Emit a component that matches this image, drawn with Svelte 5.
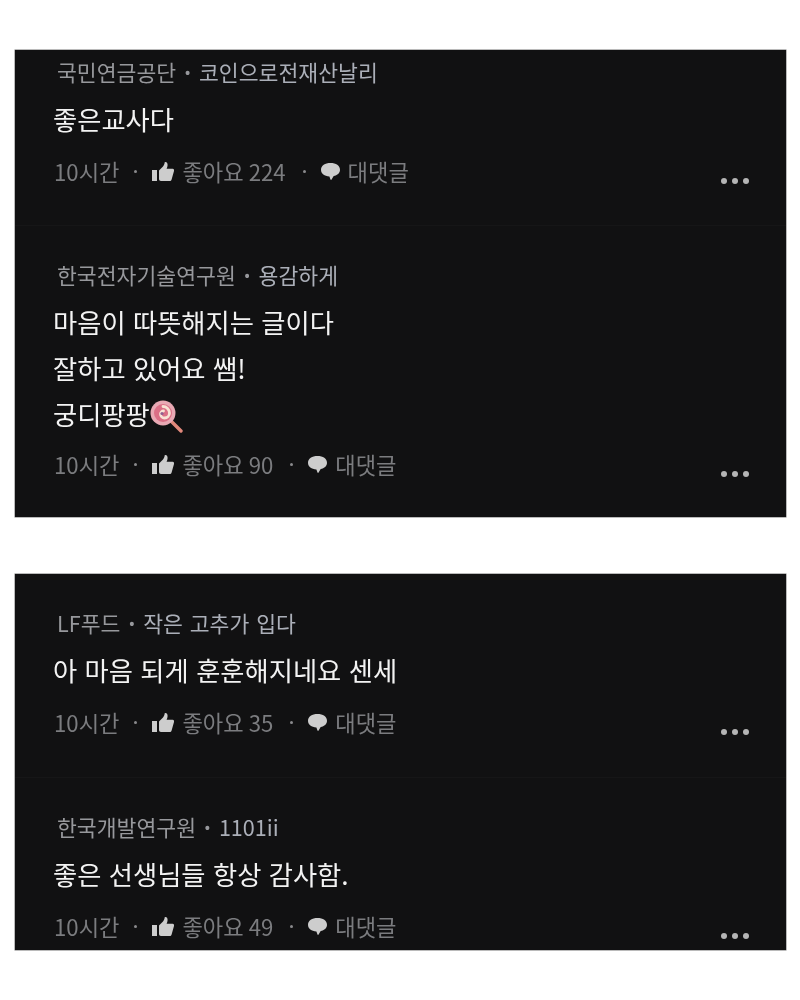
<script>
  const panels = [
    [
      { name: '국민연금공단', nick: '코인으로전재산날리', lines: ['좋은교사다'], likes: 224, top: 7, gap: 9, after: 14, bottom: 39 },
      { name: '한국전자기술연구원', nick: '용감하게', lines: ['마음이 따뜻해지는 글이다', '잘하고 있어요 쌤!', '궁디팡팡'], candy: true, likes: 90, top: 34, gap: 9, after: 12, bottom: 38 }
    ],
    [
      { name: 'LF푸드', nick: '작은 고추가 입다', lines: ['아 마음 되게 훈훈해지네요 센세'], likes: 35, top: 34, gap: 9, after: 14, bottom: 40 },
      { name: '한국개발연구원', nick: '1101ii', lines: ['좋은 선생님들 항상 감사함.'], likes: 49, top: 34, gap: 9, after: 14, bottom: 9 }
    ]
  ];
</script>

<main class="page">
  {#each panels as panel}
    <section class="panel">
      {#each panel as c}
        <article class="row" style="--top:{c.top}px;--gap:{c.gap}px;--after:{c.after}px;--bottom:{c.bottom}px">
          <div class="head">
            <span class="name">{c.name}</span><span class="sep">·</span><span class="nick">{c.nick}</span>
          </div>
          <div class="body">
            {#each c.lines as line, i}
              <p>
                {line}{#if c.candy && i === c.lines.length - 1}<svg class="candy" viewBox="0 0 34 34" aria-hidden="true">
                    <path d="M20 20 L31 31" stroke="#e2897c" stroke-width="3.4" stroke-linecap="round" />
                    <circle cx="13" cy="13" r="12.500" fill="#e9a9b4" />
                    <circle cx="13" cy="13" r="9" fill="#db6f86" />
                    <path d="M13 6.500a6.500 6.500 0 0 1 6.500 6.500a5 5 0 0 1-5 5a4 4 0 0 1-4-4a3 3 0 0 1 3-3" fill="none" stroke="#f8e2d4" stroke-width="2.800" stroke-linecap="round" />
                    <circle cx="12" cy="13.500" r="1.600" fill="#8f5f8f" />
                  </svg>{/if}
              </p>
            {/each}
          </div>
          <div class="meta">
            <span>10시간</span>
            <i class="dot"></i>
            <svg class="thumb" viewBox="0 0 22 19" aria-hidden="true">
              <path d="M0 8h5v11H0z" />
              <path d="M7 8.600 11 4.400C12 3.200 12.500 1.800 12.700.2 14.600-.3 15.600 1.200 15.600 3c0 1.400-.5 2.600-1 3.800h6c1.200 0 1.800 1 1.400 2.200l-2.400 8.400c-.3 1-1 1.600-2 1.600H9c-1.200 0-2-.8-2-2z" />
            </svg>
            <span class="likes">좋아요 {c.likes}</span>
            <i class="dot"></i>
            <svg class="chat" viewBox="0 0 19 17" aria-hidden="true">
              <path d="M9.500 0C15 0 19 2.700 19 6.800c0 3.300-2.700 5.600-6.300 6.300L10.600 16.500c-.3.500-.9.500-1.100 0L8.400 13.500C3.500 13.300 0 10.700 0 6.800 0 2.700 4 0 9.500 0z" />
            </svg>
            <span class="reply">대댓글</span>
            <span class="more"><b></b><b></b><b></b></span>
          </div>
        </article>
      {/each}
    </section>
  {/each}
</main>

<style>
  :global(body) {
    margin: 0;
    background: #fff;
  }
  .page {
    display: flex;
    flex-direction: column;
    gap: 57px;
    height: 1000px;
    box-sizing: border-box;
    padding: 50px 14px 0 15px;
    font-family: "Noto Sans CJK KR", "Noto Sans", sans-serif;
  }
  .panel {
    background: #111112;
    box-shadow: 0 0 0 0.5px #777;
  }
  .row {
    padding: var(--top) 37px var(--bottom) 38px;
  }
  .row + .row {
    border-top: 1px solid #161617;
  }
  .head {
    height: 30px;
    line-height: 30px;
    padding-left: 4px;
    font-size: 21.600px;
    word-spacing: 2px;
    color: #97989c;
    white-space: nowrap;
    filter: blur(0.45px);
  }
  .sep {
    margin: 0 5px;
    font-weight: 700;
  }
  .nick {
    color: #abafb8;
  }
  .body {
    margin-top: var(--gap);
    color: #f3f3f3;
    font-size: 26.300px;
    word-spacing: 1.500px;
    line-height: 46px;
    filter: blur(0.45px);
  }
  .body p {
    margin: 0;
    height: 46px;
    white-space: nowrap;
  }
  .candy {
    width: 34px;
    height: 34px;
    vertical-align: -9px;
  }
  .meta {
    display: flex;
    align-items: center;
    height: 30px;
    margin-top: var(--after);
    margin-left: 1px;
    font-size: 22.200px;
    line-height: 30px;
    color: #7b7c7f;
    filter: blur(0.45px);
  }
  .dot {
    width: 3px;
    height: 3px;
    margin: 0 15px;
    border-radius: 50%;
    background: #8a8a8c;
  }
  .likes {
    margin-right: 2px;
  }
  .thumb {
    width: 22px;
    height: 19px;
    fill: #cdcdcd;
    margin-right: 8px;
  }
  .chat {
    width: 19px;
    height: 17px;
    fill: #cdcdcd;
    margin-right: 8px;
  }
  .more {
    display: flex;
    gap: 5px;
    margin-left: auto;
    align-self: flex-end;
    margin-bottom: 2px;
  }
  .more b {
    width: 6px;
    height: 6px;
    border-radius: 50%;
    background: #b5b5b5;
  }
</style>
